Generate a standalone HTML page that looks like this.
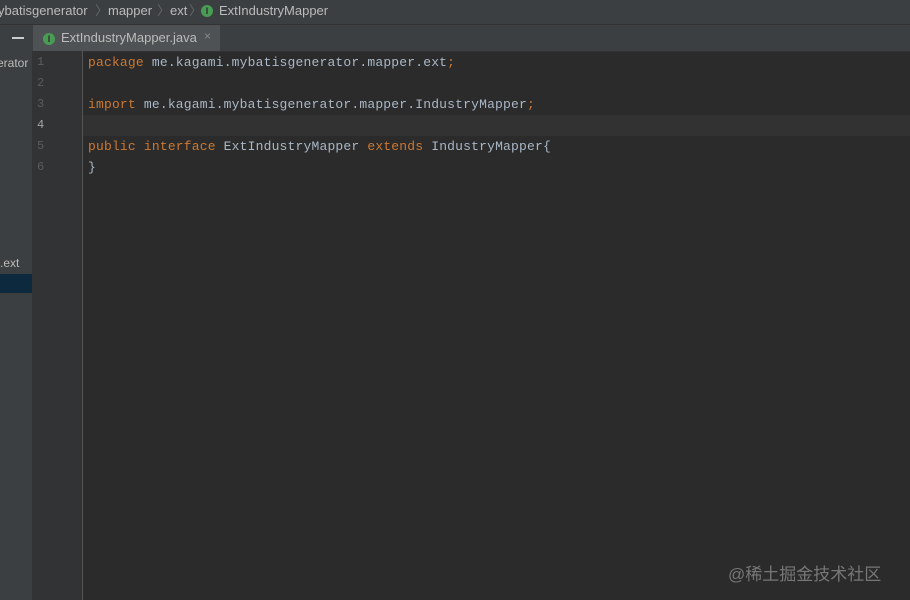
<!DOCTYPE html>
<html><head><style>
body{margin:0;width:910px;height:600px;background:#2b2b2b;position:relative;overflow:hidden;font-family:"Liberation Sans",sans-serif}
.bc{position:absolute;left:0;top:0;width:910px;height:24px;background:#3c3f41;border-bottom:1px solid #323232;color:#bbb;font-size:13px;line-height:22px;white-space:nowrap}
.bc span{position:absolute;top:0}
.tabs{position:absolute;left:0;top:25px;width:910px;height:26px;background:#3c3f41;border-bottom:1px solid #323232}
.left{position:absolute;left:0;top:51px;width:32px;height:549px;background:#3c3f41;color:#bbb;font-size:12px;overflow:hidden}
.gut{position:absolute;left:32px;top:51px;width:50px;height:549px;background:#313335;border-right:1px solid #555}
.ln{position:absolute;left:37px;color:#5a5d60;font:12px "Liberation Mono",monospace}
.code{position:absolute;left:88px;font:13px/21px "Liberation Mono",monospace;letter-spacing:0.18px;color:#a9b7c6;white-space:pre}
.k{color:#cc7832}
.ic{display:inline-block;width:12px;height:12px;border-radius:50%;background:#499c54;color:#2b2b2b;font-size:9px;line-height:12px;text-align:center;font-weight:bold}
</style></head><body>
<div class="bc"><span style="left:-2px">ybatisgenerator</span><span style="left:95px;color:#666">〉</span><span style="left:108px">mapper</span><span style="left:157px;color:#666">〉</span><span style="left:170px">ext</span><span style="left:189px;color:#666">〉</span><span style="left:201px;top:5px" class="ic">I</span><span style="left:219px">ExtIndustryMapper</span></div>
<div class="tabs">
<div style="position:absolute;left:12px;top:12px;width:12px;height:2px;background:#ccc"></div>
<div style="position:absolute;left:33px;top:0;width:187px;height:26px;background:#4e5254;border-bottom:0"></div>
<span class="ic" style="position:absolute;left:43px;top:8px">I</span>
<span style="position:absolute;left:61px;top:5px;color:#bbb;font-size:13px">ExtIndustryMapper.java</span>
<span style="position:absolute;left:204px;top:4px;color:#888;font-size:12px">×</span>
</div>
<div class="left"><div style="position:absolute;left:-3px;top:5px">erator</div><div style="position:absolute;left:0;top:205px">.ext</div><div style="position:absolute;left:0;top:223px;width:32px;height:19px;background:#0d293e"></div></div>
<div class="gut"></div>
<div style="position:absolute;left:83px;top:115px;width:827px;height:21px;background:#323232"></div>
<div class="ln" style="top:55px">1</div><div class="ln" style="top:76px">2</div><div class="ln" style="top:97px">3</div><div class="ln" style="top:118px;color:#a4a3a3">4</div><div class="ln" style="top:139px">5</div><div class="ln" style="top:160px">6</div>
<div class="code" style="top:52px"><span class="k">package</span> me.kagami.mybatisgenerator.mapper.ext<span class="k">;</span>

<span class="k">import</span> me.kagami.mybatisgenerator.mapper.IndustryMapper<span class="k">;</span>

<span class="k">public interface</span> ExtIndustryMapper <span class="k">extends</span> IndustryMapper{
}</div>
<div style="position:absolute;left:728px;top:560px;color:#777;font-size:17px;font-family:'Liberation Sans','Noto Sans CJK SC',sans-serif">@稀土掘金技术社区</div>
</body></html>
